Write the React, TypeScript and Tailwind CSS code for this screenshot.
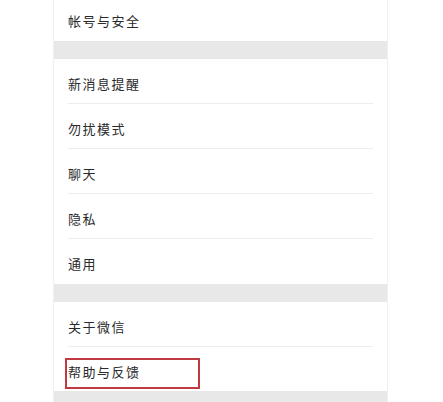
const sections: string[][] = [
  ["帐号与安全"],
  ["新消息提醒", "勿扰模式", "聊天", "隐私", "通用"],
  ["关于微信", "帮助与反馈"],
];

function Row({ label, last, marked }: { label: string; last: boolean; marked?: boolean }) {
  return (
    <div className="relative">
      <div className="flex h-[44px] items-center pl-[14px] pt-[6px]">
        <span className="text-[13px] tracking-[1.5px] text-[#2a2a2a]">{label}</span>
      </div>
      {!last && <div className="mx-[14px] h-px bg-[#ececec]" />}
      {marked && (
        <div className="absolute left-[11px] top-[11px] h-[31px] w-[135px] border-2 border-[#bf3a42]" />
      )}
    </div>
  );
}

export default function App() {
  return (
    <div
      className="h-[402px] w-[443px] overflow-hidden bg-white"
      style={{ fontFamily: '"Noto Sans CJK SC", "Noto Sans", sans-serif' }}
    >
      <div className="ml-[53px] w-[335px] border-x border-[#f0f0f0]">
        {/* 顶部被截断的一组 */}
        <div className="flex h-[41px] items-center pl-[14px] pt-px">
          <span className="text-[13px] tracking-[1.5px] text-[#2a2a2a]">{sections[0][0]}</span>
        </div>
        <div className="h-[18px] bg-[#e8e8e8]" />
        <div>
          {sections[1].map((s, i) => (
            <Row key={s} label={s} last={i === sections[1].length - 1} />
          ))}
          <div className="h-[1px]" />
        </div>
        <div className="h-[18px] bg-[#e8e8e8]" />
        <div>
          {sections[2].map((s, i) => (
            <Row key={s} label={s} last={i === sections[2].length - 1} marked={s === "帮助与反馈"} />
          ))}
        </div>
        <div className="h-[20px] bg-[#e8e8e8]" />
      </div>
    </div>
  );
}
